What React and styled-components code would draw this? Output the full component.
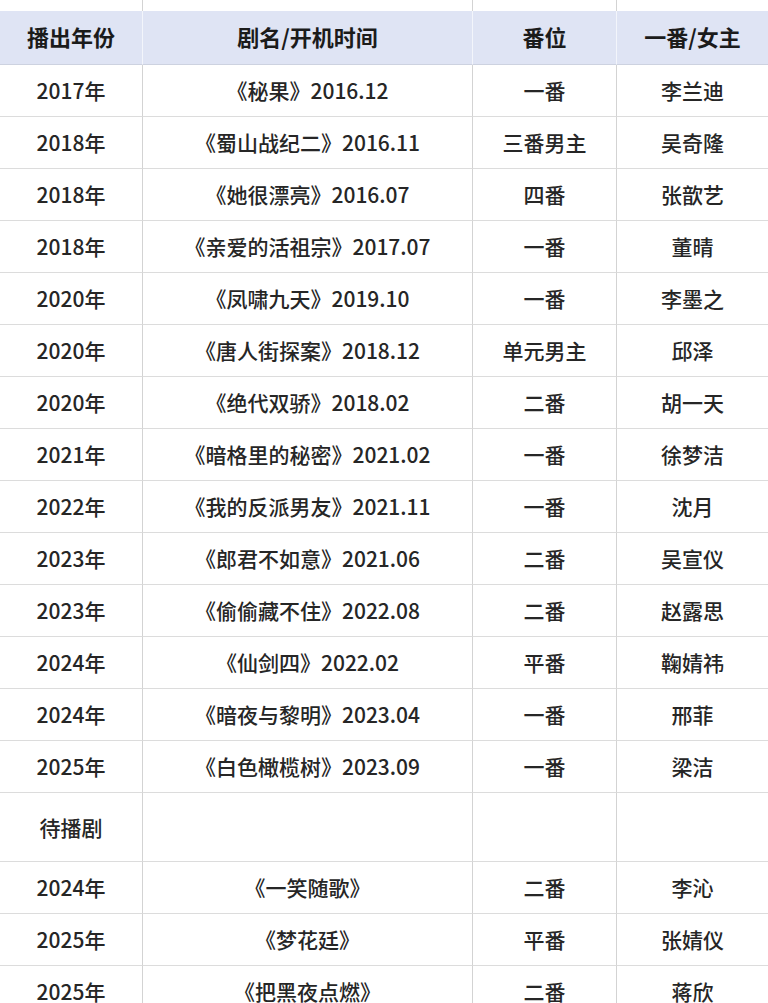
import React from "react";
import styled, { createGlobalStyle } from "styled-components";

const GlobalStyle = createGlobalStyle`
  html, body {
    margin: 0;
    padding: 0;
    background: #ffffff;
    overflow: hidden;
  }
  body {
    font-family: "Noto Sans CJK SC", "Noto Sans", sans-serif;
    color: #222222;
  }
`;

const Sheet = styled.div`
  width: 768px;
  display: grid;
  grid-template-columns: 143px 330px 144px 151px;
`;

const Cell = styled.div`
  box-sizing: border-box;
  height: ${(p) => p.$h}px;
  display: flex;
  align-items: center;
  justify-content: center;
  font-size: 21px;
  font-weight: 500;
  line-height: 1;
  color: #262626;
  white-space: nowrap;
  border-right: ${(p) => (p.$last ? "none" : "1px solid #d3d3d3")};
  border-bottom: ${(p) => (p.$noBottom ? "none" : "1px solid #dcdcdc")};
  background: #ffffff;
`;

const HeadCell = styled(Cell)`
  background: #dfe4f4;
  font-weight: 700;
  font-size: 22px;
  color: #1b1b1b;
  padding-bottom: 3px;
  border-right: ${(p) => (p.$last ? "none" : "1px solid #f3f5fb")};
  border-bottom: 1px solid #cdd2e0;
`;

const rows = [
  ["2017年", "《秘果》2016.12", "一番", "李兰迪"],
  ["2018年", "《蜀山战纪二》2016.11", "三番男主", "吴奇隆"],
  ["2018年", "《她很漂亮》2016.07", "四番", "张歆艺"],
  ["2018年", "《亲爱的活祖宗》2017.07", "一番", "董晴"],
  ["2020年", "《凤啸九天》2019.10", "一番", "李墨之"],
  ["2020年", "《唐人街探案》2018.12", "单元男主", "邱泽"],
  ["2020年", "《绝代双骄》2018.02", "二番", "胡一天"],
  ["2021年", "《暗格里的秘密》2021.02", "一番", "徐梦洁"],
  ["2022年", "《我的反派男友》2021.11", "一番", "沈月"],
  ["2023年", "《郎君不如意》2021.06", "二番", "吴宣仪"],
  ["2023年", "《偷偷藏不住》2022.08", "二番", "赵露思"],
  ["2024年", "《仙剑四》2022.02", "平番", "鞠婧祎"],
  ["2024年", "《暗夜与黎明》2023.04", "一番", "邢菲"],
  ["2025年", "《白色橄榄树》2023.09", "一番", "梁洁"],
];

const pending = [
  ["2024年", "《一笑随歌》", "二番", "李沁"],
  ["2025年", "《梦花廷》", "平番", "张婧仪"],
  ["2025年", "《把黑夜点燃》", "二番", "蒋欣"],
];

const headers = ["播出年份", "剧名/开机时间", "番位", "一番/女主"];

function Row({ cells, h }) {
  return cells.map((c, i) => (
    <Cell key={i} $h={h} $last={i === 3}>
      {c}
    </Cell>
  ));
}

export default function App() {
  return (
    <>
      <GlobalStyle />
      <Sheet>
        {[0, 1, 2, 3].map((i) => (
          <Cell key={"top" + i} $h={11} $last={i === 3} $noBottom />
        ))}
        {headers.map((t, i) => (
          <HeadCell key={t} $h={54} $last={i === 3}>
            {t}
          </HeadCell>
        ))}
        {rows.map((r, i) => (
          <Row key={"r" + i} cells={r} h={52} />
        ))}
        <Row cells={["待播剧", "", "", ""]} h={69} />
        {pending.map((r, i) => (
          <Row key={"p" + i} cells={r} h={52} />
        ))}
      </Sheet>
    </>
  );
}
